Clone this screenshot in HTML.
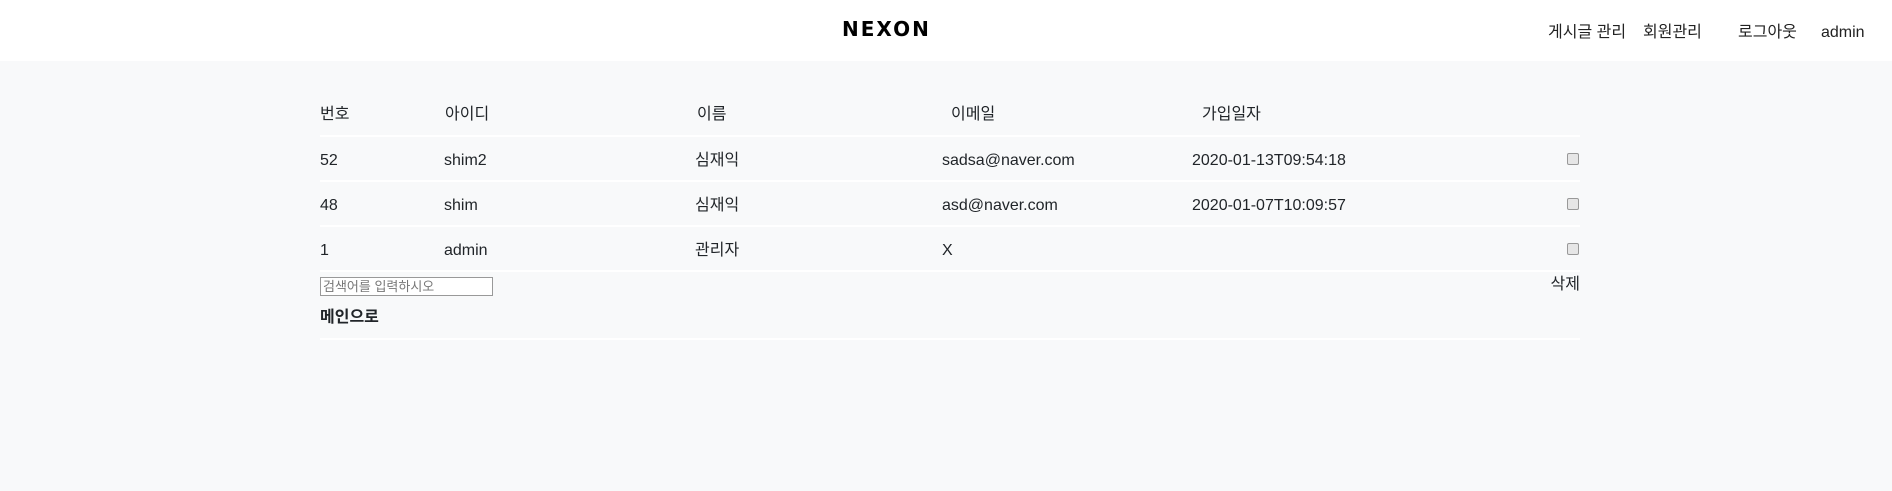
<!DOCTYPE html>
<html><head><meta charset="utf-8"><style>
*{margin:0;padding:0;box-sizing:border-box}
body{width:1892px;height:491px;background:#f8f9fa;font-family:"Liberation Sans","Noto Sans CJK KR",sans-serif;font-size:16px;color:#212529;position:relative;overflow:hidden}
.hd{position:absolute;left:0;top:0;width:1892px;height:61px;background:#fff}
.logo{position:absolute;left:842px;top:18px;font-weight:bold;font-size:20px;letter-spacing:2px;color:#000;font-family:"DejaVu Sans",sans-serif;line-height:22px}
.nav{position:absolute;top:23px;font-size:16px;color:#222;line-height:20px;height:20px;white-space:nowrap}
.t{position:absolute;line-height:20px;height:20px;white-space:nowrap}
.ln{position:absolute;left:320px;width:1260px;height:2px;background:#fff}
.cb{position:absolute;left:1567px;width:12px;height:12px;border:1px solid #999;border-radius:2px;background:#e6e6e6}
</style></head><body>
<div class="hd"></div>
<div class="logo">NEXON</div>
<div class="nav" style="left:1548px">게시글 관리</div>
<div class="nav" style="left:1643px">회원관리</div>
<div class="nav" style="left:1738px">로그아웃</div>
<div class="nav" style="left:1821px">admin</div>

<div class="t" style="left:320px;top:105px">번호</div>
<div class="t" style="left:445px;top:105px">아이디</div>
<div class="t" style="left:697px;top:105px">이름</div>
<div class="t" style="left:951px;top:105px">이메일</div>
<div class="t" style="left:1202px;top:105px">가입일자</div>
<div class="ln" style="top:135px"></div>

<div class="t" style="left:320px;top:151px">52</div>
<div class="t" style="left:444px;top:151px">shim2</div>
<div class="t" style="left:695px;top:151px">심재익</div>
<div class="t" style="left:942px;top:151px">sadsa@naver.com</div>
<div class="t" style="left:1192px;top:151px">2020-01-13T09:54:18</div>
<div class="cb" style="top:153px"></div>
<div class="ln" style="top:180px"></div>

<div class="t" style="left:320px;top:196px">48</div>
<div class="t" style="left:444px;top:196px">shim</div>
<div class="t" style="left:695px;top:196px">심재익</div>
<div class="t" style="left:942px;top:196px">asd@naver.com</div>
<div class="t" style="left:1192px;top:196px">2020-01-07T10:09:57</div>
<div class="cb" style="top:198px"></div>
<div class="ln" style="top:225px"></div>

<div class="t" style="left:320px;top:241px">1</div>
<div class="t" style="left:444px;top:241px">admin</div>
<div class="t" style="left:695px;top:241px">관리자</div>
<div class="t" style="left:942px;top:241px">X</div>
<div class="cb" style="top:243px"></div>
<div class="ln" style="top:270px"></div>

<div style="position:absolute;left:320px;top:277px;width:173px;height:19px;border:1px solid #999;background:#fff;font-size:13px;color:#777;line-height:17px;padding-left:2px">검색어를 입력하시오</div>
<div class="t" style="right:312px;top:275px">삭제</div>
<div class="t" style="left:320px;top:308px;font-weight:bold">메인으로</div>
<div class="ln" style="top:338px"></div>
</body></html>
